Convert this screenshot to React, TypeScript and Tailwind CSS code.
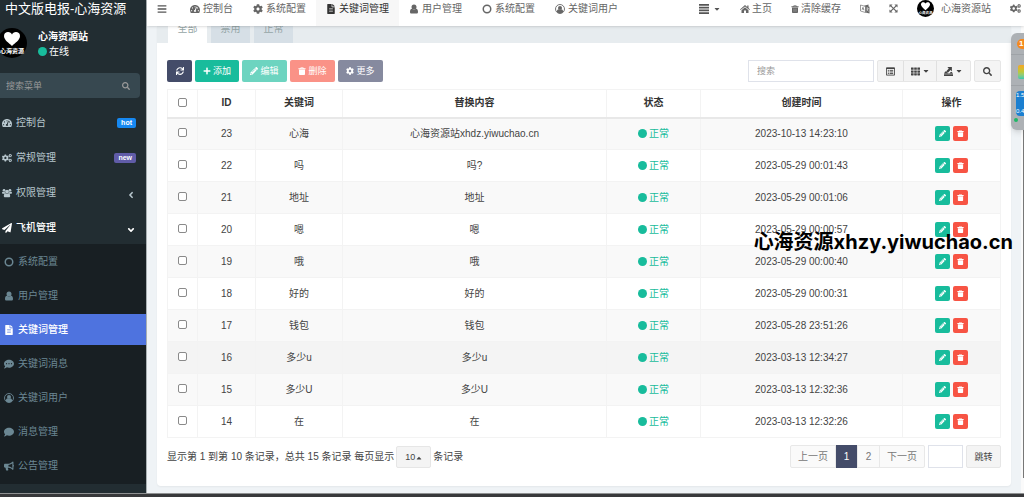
import React, { useState } from 'react';
import {
  FaAngleDown,
  FaAngleLeft,
  FaBars,
  FaBullhorn,
  FaCaretDown,
  FaCaretUp,
  FaCog,
  FaCogs,
  FaComment,
  FaCommentDots,
  FaFileAlt,
  FaPaperPlane,
  FaPencilAlt,
  FaPlus,
  FaSearch,
  FaSync,
  FaTachometerAlt,
  FaTh,
} from 'react-icons/fa';

type IconComponent = React.ComponentType<{ className?: string }>;

interface IconProps {
  className?: string;
}

interface NavItem {
  name: string;
  icon: IconComponent;
  active?: boolean;
}

const CircleIcon: React.FC<IconProps> = ({ className }) => (
  <svg viewBox="0 0 20 20" className={className} fill="none" stroke="currentColor" strokeWidth="3" aria-hidden="true">
    <circle cx="10" cy="10" r="7.500" />
  </svg>
);

const UserIcon: React.FC<IconProps> = ({ className }) => (
  <svg viewBox="0 0 20 20" className={className} fill="currentColor" aria-hidden="true">
    <circle cx="10" cy="6" r="5" />
    <path d="M6 9.500C3 9.500 2 13 2 16c0 2 1.300 3 3 3h10c1.700 0 3-1 3-3 0-3-1-6.500-4-6.500-1 1-2.400 1.700-4 1.700s-3-.7-4-1.700z" />
  </svg>
);

const UserCircleIcon: React.FC<IconProps> = ({ className }) => (
  <svg viewBox="0 0 20 20" className={className} aria-hidden="true">
    <circle cx="10" cy="10" r="9" fill="none" stroke="currentColor" strokeWidth="1.800" />
    <circle cx="10" cy="8" r="4" fill="currentColor" />
    <path d="M3.500 15.500c.5-2.500 1.700-4.500 3.500-4.800 1.800 1.500 4.200 1.500 6 0 1.800.3 3 2.300 3.500 4.800-3.500 4-9.500 4-13 0z" fill="currentColor" />
  </svg>
);

const GroupIcon: React.FC<IconProps> = ({ className }) => (
  <svg viewBox="0 0 22 20" className={className} fill="currentColor" aria-hidden="true">
    <circle cx="4.500" cy="4" r="3" />
    <circle cx="17.500" cy="4" r="3" />
    <circle cx="11" cy="7" r="4.200" />
    <path d="M2 7c1.500 1 3 1 4 .5 0 2 .7 3 1.700 4H2C.7 11.500 0 11 0 10c0-1.500.5-3 2-3zM20 7c-1.500 1-3 1-4 .5 0 2-.7 3-1.700 4H20c1.300 0 2-.5 2-1.500 0-1.500-.5-3-2-3z" />
    <path d="M7.500 10.500c2 1.700 5 1.700 7 0 2.500.3 3.500 3 3.500 6 0 2-1 3-3 3H7c-2 0-3-1-3-3 0-3 1-5.700 3.500-6z" />
  </svg>
);

const HomeIcon: React.FC<IconProps> = ({ className }) => (
  <svg viewBox="0 0 20 20" className={className} fill="currentColor" aria-hidden="true">
    <path d="M10 2l4.500 4V3H17v5.200l3 2.600-1.200 1.400L10 4.800l-8.800 7.400L0 10.800z" />
    <path d="M10 6.500l7 5.800V18h-5v-5H8v5H3v-5.700z" />
  </svg>
);

const TrashIcon: React.FC<IconProps> = ({ className }) => (
  <svg viewBox="0 0 20 20" className={className} aria-hidden="true">
    <path d="M6 3l1-2.500h6L14 3h5v2.500H1V3zm2 0h4l-.5-1h-3z" fill="currentColor" />
    <path d="M2.500 6.500h15V18c0 1.200-.8 2-2 2h-11c-1.200 0-2-.8-2-2z" fill="currentColor" />
    <path d="M7 9v8M10 9v8M13 9v8" stroke="#fff" strokeOpacity=".45" strokeWidth="1.200" />
  </svg>
);

const JustifyIcon: React.FC<IconProps> = ({ className }) => (
  <svg viewBox="0 0 20 20" className={className} fill="currentColor" aria-hidden="true">
    <path d="M0 0h20v3.500H0zM0 5.500h20V9H0zM0 11h20v3.500H0zM0 16.500h20V20H0z" />
  </svg>
);

// Two overlapping sheets, one per script
const LanguageIcon: React.FC<IconProps> = ({ className }) => (
  <svg viewBox="0 0 20 20" className={className} aria-hidden="true">
    <path d="M1 2l10 3v12L1 14z" fill="none" stroke="currentColor" strokeWidth="1.300" />
    <path d="M4 11.500l2-5 2 6M4.800 9.700l2.500.7" fill="none" stroke="currentColor" strokeWidth="1.300" />
    <path d="M8 3.500L17 1v4l2 .6V19l-8-2V5.200z" fill="currentColor" />
    <path d="M12.500 8l5 1M15 6.800v2M13 14c2-1 3-2.500 3.300-5M13.500 10c.7 2 2 3.500 3.700 4.500" stroke="#fff" strokeWidth="1.100" fill="none" />
  </svg>
);

const ArrowsIcon: React.FC<IconProps> = ({ className }) => (
  <svg viewBox="0 0 20 20" className={className} aria-hidden="true">
    <path d="M3 3l14 14M17 3L3 17" stroke="currentColor" strokeWidth="2.600" />
    <path d="M1 1h7L1 8zM19 1v7l-7-7zM1 19v-7l7 7zM19 19h-7l7-7z" fill="currentColor" />
  </svg>
);

const ListAltIcon: React.FC<IconProps> = ({ className }) => (
  <svg viewBox="0 0 20 20" className={className} fill="none" stroke="currentColor" aria-hidden="true">
    <path d="M1 2h18v16H1z" strokeWidth="2" />
    <path d="M1 3h18" strokeWidth="3" />
    <path d="M4 7.500h2.500M8 7.500h8M4 11h2.500M8 11h8M4 14.500h2.500M8 14.500h8" strokeWidth="2" />
  </svg>
);

// Arrow leaving a tray, used by the export drop-down
const ExportIcon: React.FC<IconProps> = ({ className }) => (
  <svg viewBox="0 0 16 16" className={className} fill="currentColor" aria-hidden="true">
    <path d="M6 0h8v8l-2.500-2.500L7 10 4 7.500l4.500-5zM2 8h2l3 3h3l2-2h2l2 3H0zM0 13h16v3H0z" />
  </svg>
);

const Avatar: React.FC<IconProps> = ({ className }) => (
  <svg viewBox="0 0 30 30" className={className} aria-hidden="true">
    <circle cx="15" cy="15" r="15" fill="#000" />
    <path
      d="M15 18C12 15 7 12 7 8c0-3 2-4 4-4s3.400 1 4 2.500C15.600 5 17 4 19 4s4 1 4 4c0 4-5 7-8 10z"
      fill="#fff"
    />
    <text x="15" y="25" textAnchor="middle" fontSize="6" fontWeight="700" fill="#fff">
      心海资源
    </text>
  </svg>
);

const mainMenu = [
  { name: '控制台', icon: FaTachometerAlt, badge: 'hot', badgeClass: 'bg-[#1688f1]' },
  { name: '常规管理', icon: FaCogs, badge: 'new', badgeClass: 'bg-[#605ca8]' },
  { name: '权限管理', icon: GroupIcon, arrow: FaAngleLeft },
  { name: '飞机管理', icon: FaPaperPlane, arrow: FaAngleDown, open: true },
];

const subMenu: NavItem[] = [
  { name: '系统配置', icon: CircleIcon },
  { name: '用户管理', icon: UserIcon },
  { name: '关键词管理', icon: FaFileAlt, active: true },
  { name: '关键词消息', icon: FaCommentDots },
  { name: '关键词用户', icon: UserCircleIcon },
  { name: '消息管理', icon: FaComment },
  { name: '公告管理', icon: FaBullhorn },
];

const topTabs: NavItem[] = [
  { name: '控制台', icon: FaTachometerAlt },
  { name: '系统配置', icon: FaCog },
  { name: '关键词管理', icon: FaFileAlt, active: true },
  { name: '用户管理', icon: UserIcon },
  { name: '系统配置', icon: CircleIcon },
  { name: '关键词用户', icon: UserCircleIcon },
];

const rows = [
  { id: 23, keyword: '心海', content: '心海资源站xhdz.yiwuchao.cn', time: '2023-10-13 14:23:10' },
  { id: 22, keyword: '吗', content: '吗?', time: '2023-05-29 00:01:43' },
  { id: 21, keyword: '地址', content: '地址', time: '2023-05-29 00:01:06' },
  { id: 20, keyword: '嗯', content: '嗯', time: '2023-05-29 00:00:57' },
  { id: 19, keyword: '哦', content: '哦', time: '2023-05-29 00:00:40' },
  { id: 18, keyword: '好的', content: '好的', time: '2023-05-29 00:00:31' },
  { id: 17, keyword: '钱包', content: '钱包', time: '2023-05-28 23:51:26' },
  { id: 16, keyword: '多少u', content: '多少u', time: '2023-03-13 12:34:27', hover: true },
  { id: 15, keyword: '多少U', content: '多少U', time: '2023-03-13 12:32:36' },
  { id: 14, keyword: '在', content: '在', time: '2023-03-13 12:32:26' },
];

const checkboxClass =
  'block mx-auto mb-[2px] size-[9px] appearance-none rounded-xs border border-[#8a8a8a] bg-white checked:bg-[#1688f1]';

const Sidebar: React.FC = () => (
  <aside className="w-[147px] shrink-0 overflow-hidden border-r border-[#a9b0b3] bg-[#222d32] text-[#b8c7ce]">
    <a href="#" className="block h-[26px] pl-[5px] text-[13px] leading-[18px] whitespace-nowrap text-white">
      中文版电报-心海资源
    </a>
    <div className="flex h-[47px] items-start gap-[11px] pt-[2px]">
      <Avatar className="-ml-[3px] size-[30px] shrink-0" />
      <div className="pt-px leading-[15px] text-white">
        <p className="font-bold">心海资源站</p>
        <p className="flex items-center gap-[2px]">
          <span className="size-[9px] rounded-full bg-[#18bc9c]" />
          在线
        </p>
      </div>
    </div>
    <form className="mr-[6px] flex h-[25px] items-center rounded-r-sm bg-[#374850] pr-[10px]">
      <input
        type="text"
        aria-label="搜索菜单"
        placeholder="搜索菜单"
        className="min-w-0 flex-1 pl-[6px] text-[9px] outline-none placeholder:text-[#999]"
      />
      <button type="button" aria-label="搜索" className="text-[#999]">
        <FaSearch className="size-[8px]" />
      </button>
    </form>
    <nav className="mt-2">
      <ul className="flex flex-col gap-px">
        {mainMenu.map(({ name, icon: Icon, arrow: Arrow, badge, badgeClass, open }) => (
          <li key={name}>
            <a
              href="#"
              className={`flex h-[34px] items-center pr-[10px] pl-[2px] ${open ? 'font-medium text-white' : ''}`}
            >
              <Icon className="mr-1 size-[10px]" />
              <span className="flex-1">{name}</span>
              {badge && (
                <span className={`rounded-xs px-1 text-[7px] leading-[10px] font-bold text-white ${badgeClass}`}>
                  {badge}
                </span>
              )}
              {Arrow && <Arrow className="mt-1 size-[10px]" />}
            </a>
          </li>
        ))}
      </ul>
      <ul className="-mt-px flex flex-col gap-[3px] bg-[#181f23] pt-[2px] pb-[3px]">
        {subMenu.map(({ name, icon: Icon, active }) => (
          <li key={name}>
            <a
              href="#"
              className={`flex h-[31px] items-center gap-1 pl-1 ${
                active ? 'bg-[#4e73df] font-medium text-white' : 'text-[#6b8793]'
              }`}
            >
              <Icon className="size-[10px]" />
              {name}
            </a>
          </li>
        ))}
      </ul>
    </nav>
  </aside>
);

const Topbar: React.FC = () => (
  <header className="relative z-10 flex h-[26px] justify-between bg-white text-[#666] shadow-sm">
    <div className="flex">
      <button type="button" aria-label="菜单" className="w-[33px] pb-[9px] pl-[10px] text-[#555]">
        <FaBars className="size-[10px]" />
      </button>
      {topTabs.map(({ name, icon: Icon, active }, i) => (
        <a
          key={i}
          href="#"
          className={`flex items-center gap-[3px] px-[10px] pb-[9px] whitespace-nowrap ${
            active ? 'bg-[#f7f7f7] text-[#333]' : ''
          }`}
        >
          <Icon className="size-[10px]" />
          {name}
        </a>
      ))}
    </div>
    <div className="flex items-center gap-[19px] pr-[3px] pb-[9px] whitespace-nowrap">
      <button type="button" aria-label="列表" className="flex items-center gap-1 text-[#555]">
        <JustifyIcon className="size-[10px]" />
        <FaCaretDown className="size-[8px]" />
      </button>
      <a href="#" className="flex items-center gap-[2px]">
        <HomeIcon className="size-[10px]" />
        主页
      </a>
      <a href="#" className="flex items-center gap-[2px]">
        <TrashIcon className="size-[8px]" />
        清除缓存
      </a>
      <button type="button" aria-label="语言">
        <LanguageIcon className="size-[10px]" />
      </button>
      <button type="button" aria-label="全屏">
        <ArrowsIcon className="size-[9px]" />
      </button>
      <a href="#" className="flex items-center gap-[7px]">
        <Avatar className="size-[17px]" />
        心海资源站
      </a>
      <button type="button" aria-label="设置">
        <FaCogs className="size-[11px]" />
      </button>
    </div>
  </header>
);

const Toolbar: React.FC = () => (
  <div className="flex h-[22px] justify-between text-[9px]">
    <div className="flex gap-[3px] text-white">
      <button type="button" aria-label="刷新" className="flex w-[25px] items-center justify-center rounded-xs bg-[#444c69]">
        <FaSync className="size-[8px]" />
      </button>
      <button type="button" className="flex w-[44px] items-center justify-center gap-[2px] rounded-xs bg-[#18bc9c]">
        <FaPlus className="size-[8px]" />
        添加
      </button>
      <button type="button" className="flex w-[45px] items-center justify-center gap-[2px] rounded-xs bg-[#6dd4c0]">
        <FaPencilAlt className="size-[8px]" />
        编辑
      </button>
      <button type="button" className="flex w-[45px] items-center justify-center gap-[2px] rounded-xs bg-[#fa9287]">
        <TrashIcon className="size-[8px]" />
        删除
      </button>
      <button type="button" className="flex w-[45px] items-center justify-center gap-[2px] rounded-xs bg-[#868a9f]">
        <FaCog className="size-[8px]" />
        更多
      </button>
    </div>
    <div className="flex gap-[3px] text-[#444]">
      <input
        type="text"
        aria-label="搜索"
        placeholder="搜索"
        className="w-[126px] border border-[#dfe2ea] px-2 outline-none placeholder:text-[#999]"
      />
      <div className="flex divide-x divide-[#e0e0e0] rounded-xs border border-[#e6e6e6] bg-[#f4f4f4]">
        <button type="button" aria-label="切换" className="flex w-[26px] items-center justify-center">
          <ListAltIcon className="size-[9px]" />
        </button>
        <button type="button" aria-label="列" className="flex w-[33px] items-center justify-center gap-[2px]">
          <FaTh className="size-[9px]" />
          <FaCaretDown className="size-[8px]" />
        </button>
        <button type="button" aria-label="导出" className="flex w-[33px] items-center justify-center gap-[2px]">
          <ExportIcon className="size-[9px]" />
          <FaCaretDown className="size-[8px]" />
        </button>
      </div>
      <button
        type="button"
        aria-label="普通搜索"
        className="flex w-[27px] items-center justify-center rounded-xs border border-[#e6e6e6] bg-[#f4f4f4]"
      >
        <FaSearch className="size-[9px]" />
      </button>
    </div>
  </div>
);

const KeywordTable: React.FC = () => (
  <table className="mt-[7px] w-full table-fixed border-collapse text-center text-[#444] [&_td]:border [&_td]:border-[#f3f3f3] [&_th]:border [&_th]:border-[#f3f3f3]">
    <colgroup>
      <col className="w-[30px]" />
      <col className="w-[58px]" />
      <col className="w-[87px]" />
      <col />
      <col className="w-[94px]" />
      <col className="w-[202px]" />
      <col className="w-[98px]" />
    </colgroup>
    <thead>
      <tr className="h-[28px] border-b-2 border-[#e8e8e8] text-[#333]">
        <th>
          <input type="checkbox" aria-label="全选" className={checkboxClass} />
        </th>
        <th>ID</th>
        <th>关键词</th>
        <th>替换内容</th>
        <th>状态</th>
        <th>创建时间</th>
        <th>操作</th>
      </tr>
    </thead>
    <tbody>
      {rows.map((row) => (
        <tr key={row.id} className={`h-8 ${row.hover ? 'bg-[#f4f4f4]' : 'odd:bg-[#f9f9f9]'}`}>
          <td>
            <input type="checkbox" aria-label={`${row.id}`} className={checkboxClass} />
          </td>
          <td>{row.id}</td>
          <td>{row.keyword}</td>
          <td>{row.content}</td>
          <td>
            <div className="flex items-center justify-center gap-[2px] text-[#18bc9c]">
              <span className="size-[9px] rounded-full bg-[#18bc9c]" />
              正常
            </div>
          </td>
          <td>{row.time}</td>
          <td>
            <div className="flex justify-center gap-[3px] text-white">
              <button type="button" aria-label="编辑" className="flex size-[15px] items-center justify-center rounded-xs bg-[#18bc9c]">
                <FaPencilAlt className="size-[7px]" />
              </button>
              <button type="button" aria-label="删除" className="flex size-[15px] items-center justify-center rounded-xs bg-[#f75444]">
                <TrashIcon className="size-[7px]" />
              </button>
            </div>
          </td>
        </tr>
      ))}
    </tbody>
  </table>
);

const Pagination: React.FC = () => {
  const [pageSize, setPageSize] = useState('10');

  return (
    <div className="mt-[7px] flex h-[23px] items-stretch justify-between text-[#555]">
      <div className="flex items-center gap-[2px] text-[#444]">
        <span>显示第 1 到第 10 条记录，总共 15 条记录 每页显示</span>
        <div className="relative">
          <select
            aria-label="每页显示"
            value={pageSize}
            onChange={(e) => setPageSize(e.target.value)}
            className="h-[22px] w-[35px] appearance-none rounded-xs border border-[#e6e6e6] bg-[#f4f4f4] pl-2 text-[9px]"
          >
            <option>10</option>
            <option>25</option>
            <option>50</option>
          </select>
          <FaCaretUp className="pointer-events-none absolute top-2 right-2 size-[8px]" />
        </div>
        <span>条记录</span>
      </div>
      <div className="flex gap-[3px]">
        <nav className="flex divide-x divide-[#e8e8e8] rounded-xs border border-[#e8e8e8] bg-[#fafafa] text-[#777]">
          <a href="#" className="flex items-center px-[7px]">上一页</a>
          <a href="#" className="-my-px flex w-[22px] items-center justify-center bg-[#444c69] text-white">1</a>
          <a href="#" className="flex w-[22px] items-center justify-center">2</a>
          <a href="#" className="flex items-center px-[7px]">下一页</a>
        </nav>
        <input type="text" aria-label="页码" className="w-[35px] border border-[#dfe2ea] px-1 outline-none" />
        <button type="button" className="w-[35px] rounded-xs border border-[#e6e6e6] bg-[#f4f4f4] text-[9px] text-[#444]">
          跳转
        </button>
      </div>
    </div>
  );
};

// Floating system monitor that peeks in from the window's right edge
const DeskWidget: React.FC = () => (
  <div className="absolute top-[33px] right-0 z-20 flex h-[97px] w-[13px] flex-col items-end overflow-hidden rounded-l-md bg-[#adb1b5] shadow-md">
    <span className="mt-[6px] h-[10px] w-[7px] rounded-l-full bg-[#f58a1f] pl-[2px] text-[8px] leading-[10px] font-bold text-white">1</span>
    <span className="mt-[5px] h-px w-full bg-[#9fa3a7]" />
    <span className="mt-[10px] h-[14px] w-[6px] rounded-l-xs bg-linear-to-b from-[#f5a623] via-[#b9c93c] to-[#2fc9b0]" />
    <span className="mt-[6px] h-px w-full bg-[#9fa3a7]" />
    <span className="mt-[5px] h-[25px] w-[8px] rounded-l-sm bg-[#1b7fd0] text-[6px] leading-[8px] text-white">
      1.5
      <br />
      <br />
      0.4
    </span>
    <span className="mt-[2px] mr-[6px] size-1 rounded-full bg-[#1fb866]" />
  </div>
);

const App: React.FC = () => {
  return (
    <div className="relative flex min-h-screen flex-col overflow-hidden font-['Liberation_Sans','Noto_Sans_CJK_SC',sans-serif] text-[10px] leading-[14px]">
      <div className="flex flex-1">
        <Sidebar />
        <div className="flex min-w-0 flex-1 flex-col bg-[#eff3f6]">
          <Topbar />
          <div className="flex flex-1">
            <main className="ml-[10px] min-w-0 flex-1 self-start rounded-b-sm bg-white shadow-xs">
              <div className="flex h-[17px] gap-1 overflow-hidden bg-[#e7ecef] pl-[11px] leading-[6px] text-[#95a5a6]">
                <button type="button" className="flex w-[39px] justify-center bg-white">全部</button>
                <button type="button" className="flex w-[39px] justify-center bg-[#d6dfe6]">禁用</button>
                <button type="button" className="flex w-[39px] justify-center bg-[#d6dfe6]">正常</button>
              </div>
              <div className="px-[10px] pt-[17px] pb-[18px]">
                <Toolbar />
                <KeywordTable />
                <Pagination />
              </div>
            </main>
            <div className="ml-[10px] flex w-[3px] justify-end bg-[#fafafa] pt-2 pb-[15px]">
              <div className="w-px bg-[#777]" />
            </div>
          </div>
        </div>
      </div>
      <footer className="h-1 border-t border-[#8f9192] bg-[#38393b]" />
      <DeskWidget />
      <p className="pointer-events-none absolute top-[230px] right-[11px] z-20 font-['Inter','Noto_Sans_CJK_SC',sans-serif] text-[20px] leading-[24px] font-bold text-black">
        心海资源xhzy.yiwuchao.cn
      </p>
    </div>
  );
};

export default App;
